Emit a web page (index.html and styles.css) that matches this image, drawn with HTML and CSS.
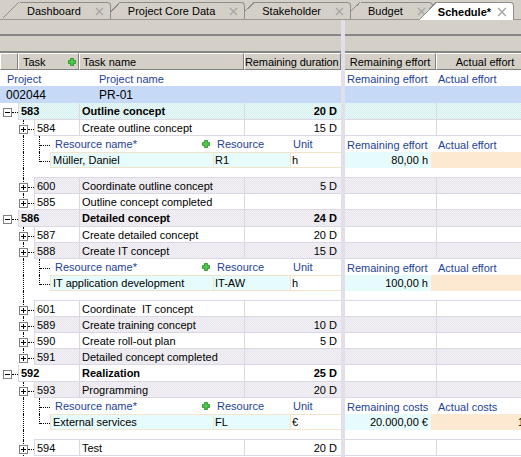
FILE: index.html
```html
<!DOCTYPE html>
<html lang="en">
<head>
  <meta charset="UTF-8">
  <title>Schedule</title>
  <link rel="stylesheet" href="styles.css">
</head>
<body>

<div class="tabs">
  <div class="tab">Dashboard <svg class="close" viewBox="0 0 9 9"><path d="M1 1L8 8M8 1L1 8"/></svg></div>
  <div class="tab">Project Core Data <svg class="close" viewBox="0 0 9 9"><path d="M1 1L8 8M8 1L1 8"/></svg></div>
  <div class="tab">Stakeholder <svg class="close" viewBox="0 0 9 9"><path d="M1 1L8 8M8 1L1 8"/></svg></div>
  <div class="tab">Budget <svg class="close" viewBox="0 0 9 9"><path d="M1 1L8 8M8 1L1 8"/></svg></div>
  <div class="tab on">Schedule* <svg class="close" viewBox="0 0 9 9"><path d="M1 1L8 8M8 1L1 8"/></svg></div>
</div>

<div class="main">

  <!-- left pane: tree + task columns -->
  <div class="pane left">
    <div class="band"></div>
    <div class="band"></div>
    <div class="hd">
      <div class="hc h0"></div>
      <div class="hc h1">Task <svg class="plus" viewBox="0 0 8 8"><path d="M2.5 .5h3v2h2v3h-2v2h-3v-2h-2v-3h2z"/></svg></div>
      <div class="hc h2">Task name</div>
      <div class="hc h3">Remaining duration</div>
    </div>

    <div class="r lbl"><span class="pc">Project</span><span>Project name</span></div>
    <div class="r prj"><span class="pc">002044</span><span>PR-01</span></div>

    <div class="r ph sel">
      <div class="t"><div class="g"><span class="n"><span class="bx"></span></span></div><div class="c">583</div></div>
      <div class="c nm">Outline concept</div>
      <div class="c du">20 D</div>
    </div>
    <div class="r">
      <div class="t"><div class="g"><span class="s"></span><span class="n v"><span class="bx pl"></span></span></div><div class="c">584</div></div>
      <div class="c nm">Create outline concept</div>
      <div class="c du">15 D</div>
    </div>
    <div class="r rh">
      <div class="g"><span class="s"></span><span class="s v"></span><span class="k v"></span></div>
      <div class="rn">Resource name* <svg class="plus" viewBox="0 0 8 8"><path d="M2.5 .5h3v2h2v3h-2v2h-3v-2h-2v-3h2z"/></svg></div>
      <div class="rr">Resource</div>
      <div class="ru">Unit</div>
    </div>
    <div class="r rd">
      <div class="g"><span class="s"></span><span class="s v"></span><span class="k e"></span></div>
      <div class="rn">Müller, Daniel</div>
      <div class="rr">R1</div>
      <div class="ru">h</div>
    </div>
    <div class="r gap"><div class="g"><span class="s"></span><span class="s v"></span></div><div class="fill"></div></div>
    <div class="r alt">
      <div class="t"><div class="g"><span class="s"></span><span class="n v"><span class="bx pl"></span></span></div><div class="c">600</div></div>
      <div class="c nm">Coordinate outline concept</div>
      <div class="c du">5 D</div>
    </div>
    <div class="r">
      <div class="t"><div class="g"><span class="s"></span><span class="n e"><span class="bx pl"></span></span></div><div class="c">585</div></div>
      <div class="c nm">Outline concept completed</div>
      <div class="c du"></div>
    </div>

    <div class="r ph alt">
      <div class="t"><div class="g"><span class="n"><span class="bx"></span></span></div><div class="c">586</div></div>
      <div class="c nm">Detailed concept</div>
      <div class="c du">24 D</div>
    </div>
    <div class="r">
      <div class="t"><div class="g"><span class="s"></span><span class="n v"><span class="bx pl"></span></span></div><div class="c">587</div></div>
      <div class="c nm">Create detailed concept</div>
      <div class="c du">20 D</div>
    </div>
    <div class="r alt">
      <div class="t"><div class="g"><span class="s"></span><span class="n v"><span class="bx pl"></span></span></div><div class="c">588</div></div>
      <div class="c nm">Create IT concept</div>
      <div class="c du">15 D</div>
    </div>
    <div class="r rh">
      <div class="g"><span class="s"></span><span class="s v"></span><span class="k v"></span></div>
      <div class="rn">Resource name* <svg class="plus" viewBox="0 0 8 8"><path d="M2.5 .5h3v2h2v3h-2v2h-3v-2h-2v-3h2z"/></svg></div>
      <div class="rr">Resource</div>
      <div class="ru">Unit</div>
    </div>
    <div class="r rd">
      <div class="g"><span class="s"></span><span class="s v"></span><span class="k e"></span></div>
      <div class="rn">IT application development</div>
      <div class="rr">IT-AW</div>
      <div class="ru">h</div>
    </div>
    <div class="r gap"><div class="g"><span class="s"></span><span class="s v"></span></div><div class="fill"></div></div>
    <div class="r">
      <div class="t"><div class="g"><span class="s"></span><span class="n v"><span class="bx pl"></span></span></div><div class="c">601</div></div>
      <div class="c nm">Coordinate  IT concept</div>
      <div class="c du"></div>
    </div>
    <div class="r alt">
      <div class="t"><div class="g"><span class="s"></span><span class="n v"><span class="bx pl"></span></span></div><div class="c">589</div></div>
      <div class="c nm">Create training concept</div>
      <div class="c du">10 D</div>
    </div>
    <div class="r">
      <div class="t"><div class="g"><span class="s"></span><span class="n v"><span class="bx pl"></span></span></div><div class="c">590</div></div>
      <div class="c nm">Create roll-out plan</div>
      <div class="c du">5 D</div>
    </div>
    <div class="r alt">
      <div class="t"><div class="g"><span class="s"></span><span class="n e"><span class="bx pl"></span></span></div><div class="c">591</div></div>
      <div class="c nm">Detailed concept completed</div>
      <div class="c du"></div>
    </div>

    <div class="r ph">
      <div class="t"><div class="g"><span class="n"><span class="bx"></span></span></div><div class="c">592</div></div>
      <div class="c nm">Realization</div>
      <div class="c du">25 D</div>
    </div>
    <div class="r alt">
      <div class="t"><div class="g"><span class="s"></span><span class="n v"><span class="bx pl"></span></span></div><div class="c">593</div></div>
      <div class="c nm">Programming</div>
      <div class="c du">20 D</div>
    </div>
    <div class="r rh">
      <div class="g"><span class="s"></span><span class="s v"></span><span class="k v"></span></div>
      <div class="rn">Resource name* <svg class="plus" viewBox="0 0 8 8"><path d="M2.5 .5h3v2h2v3h-2v2h-3v-2h-2v-3h2z"/></svg></div>
      <div class="rr">Resource</div>
      <div class="ru">Unit</div>
    </div>
    <div class="r rd">
      <div class="g"><span class="s"></span><span class="s v"></span><span class="k e"></span></div>
      <div class="rn">External services</div>
      <div class="rr">FL</div>
      <div class="ru">€</div>
    </div>
    <div class="r gap"><div class="g"><span class="s"></span><span class="s v"></span></div><div class="fill"></div></div>
    <div class="r">
      <div class="t"><div class="g"><span class="s"></span><span class="n v"><span class="bx pl"></span></span></div><div class="c">594</div></div>
      <div class="c nm">Test</div>
      <div class="c du">20 D</div>
    </div>
  </div>

  <div class="split"></div>

  <!-- right pane: effort / cost columns -->
  <div class="pane right">
    <div class="band"></div>
    <div class="band"></div>
    <div class="hd">
      <div class="hc c1">Remaining effort</div>
      <div class="hc c2">Actual effort</div>
    </div>

    <div class="r lbl"><span class="q1">Remaining effort</span><span>Actual effort</span></div>
    <div class="r prj"></div>

    <div class="r ph sel"><div class="c c1"></div><div class="c c2"></div></div>
    <div class="r"><div class="c c1"></div><div class="c c2"></div></div>
    <div class="r lbl"><span class="q1">Remaining effort</span><span>Actual effort</span></div>
    <div class="r vd"><div class="v1">80,00 h</div><div class="v2"></div></div>
    <div class="r gap"><div class="fill"></div></div>
    <div class="r alt"><div class="c c1"></div><div class="c c2"></div></div>
    <div class="r"><div class="c c1"></div><div class="c c2"></div></div>

    <div class="r ph alt"><div class="c c1"></div><div class="c c2"></div></div>
    <div class="r"><div class="c c1"></div><div class="c c2"></div></div>
    <div class="r alt"><div class="c c1"></div><div class="c c2"></div></div>
    <div class="r lbl"><span class="q1">Remaining effort</span><span>Actual effort</span></div>
    <div class="r vd"><div class="v1">100,00 h</div><div class="v2"></div></div>
    <div class="r gap"><div class="fill"></div></div>
    <div class="r"><div class="c c1"></div><div class="c c2"></div></div>
    <div class="r alt"><div class="c c1"></div><div class="c c2"></div></div>
    <div class="r"><div class="c c1"></div><div class="c c2"></div></div>
    <div class="r alt"><div class="c c1"></div><div class="c c2"></div></div>

    <div class="r ph"><div class="c c1"></div><div class="c c2"></div></div>
    <div class="r alt"><div class="c c1"></div><div class="c c2"></div></div>
    <div class="r lbl"><span class="q1">Remaining costs</span><span>Actual costs</span></div>
    <div class="r vd"><div class="v1">20.000,00 €</div><div class="v2">10.000,00 €</div></div>
    <div class="r gap"><div class="fill"></div></div>
    <div class="r"><div class="c c1"></div><div class="c c2"></div></div>
  </div>

</div>

</body>
</html>
```

FILE: styles.css
```css
* {
  box-sizing: border-box;
}

body {
  margin: 0;
  width: 521px;
  height: 457px;
  overflow: hidden;
  font-family: 'Liberation Sans', Arial, sans-serif;
  font-size: 11px;
  color: #000;
  background: #fff;
}

/* ---- tab strip ---- */

.tabs {
  display: flex;
  height: 20px;
  padding-left: 20px;
  background: #d4d0c8;
  box-shadow: inset 0 -1px #9c9890;
}

.tab {
  position: relative;
  display: flex;
  align-items: center;
  gap: 14px;
  height: 17px;
  margin-top: 2px;
  padding: 0 6px 0 7px;
  background: #d4d0c8;
  border-top: 1px solid #8d8d8d;
  border-right: 1px solid #8d8d8d;
  border-top-right-radius: 4px;
  white-space: nowrap;
}

.tab + .tab {
  margin-left: 10px;
}

.tab::before {
  content: "";
  position: absolute;
  top: -1px;
  left: -17px;
  width: 17px;
  height: 17px;
  background: linear-gradient(to bottom right, transparent calc(50% - 1px), #8d8d8d calc(50% - 1px), #8d8d8d 50%, #d4d0c8 50%);
}

.tab:nth-child(1) { z-index: 5; }
.tab:nth-child(2) { z-index: 4; }
.tab:nth-child(3) { z-index: 3; }
.tab:nth-child(4) { z-index: 2; }

.tab.on {
  z-index: 10;
  height: 18px;
  gap: 6px;
  margin-left: 4px;
  padding-left: 1px;
  background: #fff;
  font-weight: bold;
}

.tab.on::before {
  height: 18px;
  background: linear-gradient(to bottom right, transparent calc(50% - 1px), #8d8d8d calc(50% - 1px), #8d8d8d 50%, #fff 50%);
}

.close {
  width: 9px;
  height: 9px;
  fill: none;
  stroke: #a6a6a6;
  stroke-width: 1.3;
}

.on .close {
  width: 10px;
  height: 10px;
}

/* ---- panes ---- */

.main {
  display: flex;
  height: 437px;
}

.left {
  width: 341px;
  flex: none;
}

.split {
  width: 4px;
  flex: none;
  background: #e3dfea;
}

.right {
  flex: 1;
  min-width: 0;
  overflow: hidden;
}

.band {
  height: 16px;
  background: #d4d0c8;
  border-bottom: 2px solid #868686;
}

.band + .band {
  height: 17px;
}

.hd {
  display: flex;
  height: 17px;
}

.hc {
  display: flex;
  align-items: center;
  height: 17px;
  padding: 0 3px;
  background: #d4d0c8;
  border: 1px solid;
  border-color: #fff #808080 #808080 #fff;
  white-space: nowrap;
  overflow: hidden;
}

.h0 { width: 18px; }
.h1 { width: 61px; justify-content: space-between; padding: 0 2px 0 4px; }
.h2 { width: 165px; }
.h3 { flex: 1; padding: 0; letter-spacing: -0.1px; }

.hd .c1 { width: 91px; flex: none; justify-content: center; }
.hd .c2 { width: 98px; flex: none; justify-content: center; }

.plus {
  width: 8px;
  height: 8px;
  flex: none;
  fill: #4cc64c;
  stroke: #1d8d1d;
  stroke-width: .8;
}

/* ---- rows ---- */

.r {
  display: flex;
  height: 16px;
}

.r.ph {
  height: 17px;
}

.lbl {
  align-items: center;
  padding-top: 1px;
  color: #1e3f9c;
  white-space: nowrap;
}

.lbl .pc { width: 99px; padding-left: 7px; }
.lbl .q1 { width: 91px; padding-left: 2px; flex: none; }
.lbl .q1 + span { padding-left: 2px; }

.prj {
  height: 17px;
  align-items: center;
  padding-top: 1px;
  background: #c6d9f7;
  font-size: 12px;
}

.prj .pc { width: 99px; padding-left: 6px; }

.t {
  display: flex;
  width: 79px;
  flex: none;
}

.c {
  padding: 0 2px;
  line-height: 16px;
  border-left: 1px solid #dcd8e3;
  border-bottom: 1px solid #dcd8e3;
  white-space: pre;
  overflow: hidden;
}

.t .c { flex: 1; }
.nm { width: 165px; flex: none; }
.du { flex: 1; text-align: right; padding-right: 4px; }

.ph .c { font-weight: bold; }

.alt .c {
  background: repeating-conic-gradient(#f3f1f5 0 25%, #e8e6ec 0 50%) 0 0 / 2px 2px;
}

.sel .c {
  background: repeating-conic-gradient(#e9f8f8 0 25%, #d5efef 0 50%) 0 0 / 2px 2px;
}

.right .c1 { width: 91px; flex: none; border-left: 0; }
.right .c2 { width: 98px; flex: none; }

/* ---- tree gutter ---- */

.g {
  display: flex;
  flex: none;
  height: 100%;
  background: #fff;
}

.s { position: relative; width: 16px; }
.n { position: relative; width: 18px; }
.k { position: relative; width: 18px; }

.v::before,
.e::before {
  content: "";
  position: absolute;
  left: 7px;
  top: 0;
  bottom: 0;
  border-left: 1px dotted #000;
}

.e::before {
  bottom: auto;
  height: 10px;
}

.n::after,
.k::after {
  content: "";
  position: absolute;
  top: 9px;
  left: 12px;
  right: 0;
  border-top: 1px dotted #000;
}

.k::after { left: 8px; }

.bx {
  position: absolute;
  left: 3px;
  top: 5px;
  width: 9px;
  height: 9px;
  border: 1px solid #808080;
  background: #fff;
}

.bx::before,
.bx.pl::after {
  content: "";
  position: absolute;
  left: 1px;
  top: 3px;
  width: 5px;
  height: 1px;
  background: #000;
}

.bx.pl::after {
  left: 3px;
  top: 1px;
  width: 1px;
  height: 5px;
}

/* ---- resource sub-tables ---- */

.rh { color: #1e3f9c; line-height: 17px; }

.rn {
  width: 163px;
  flex: none;
  display: flex;
  align-items: center;
  justify-content: space-between;
  padding: 0 3px 0 5px;
  white-space: nowrap;
}

.rr { width: 77px; flex: none; padding-left: 4px; }
.ru { flex: 1; padding-left: 3px; }

.rd .rn,
.rd .rr,
.rd .ru {
  line-height: 15px;
  border: 1px solid #f3e3ca;
  border-right: 0;
  background: #e6fbfb;
}

.rd .rn { padding-left: 2px; }
.rd .rr { padding-left: 1px; }
.rd .ru { padding-left: 1px; background: #fff; }

.vd { line-height: 17px; white-space: nowrap; }

.v1 {
  width: 86px;
  flex: none;
  padding-right: 3px;
  text-align: right;
  background: #e6fbfb;
}

.v2 {
  width: 148px;
  flex: none;
  padding-right: 3px;
  text-align: right;
  background: #fde9d1;
}

.gap { height: 10px; }

.gap .fill {
  flex: 1;
  margin-left: 2px;
  border-bottom: 1px solid #dcd8e3;
}

.right .gap .fill { margin-left: 0; }
```
